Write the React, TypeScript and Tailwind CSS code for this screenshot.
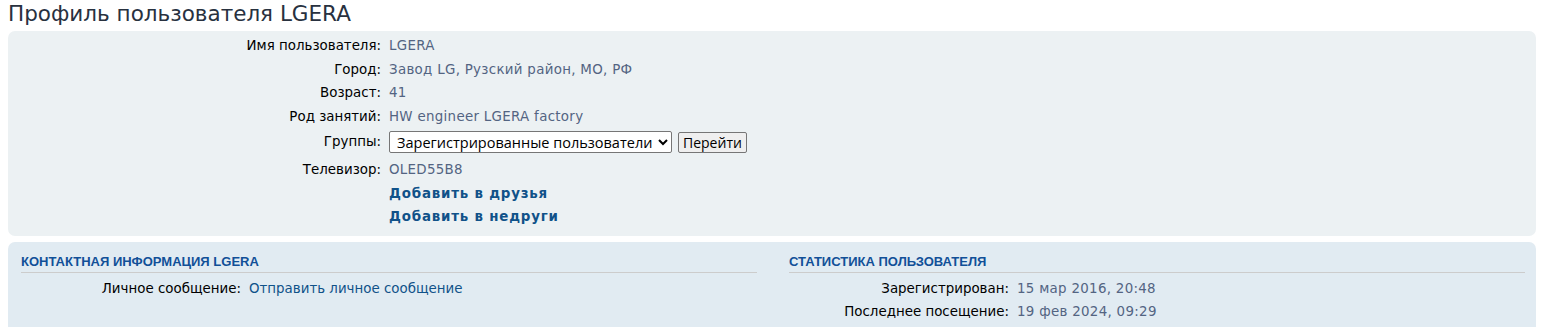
const body = { fontFamily: '"DejaVu Sans", Verdana, sans-serif' };

function Row({ label, children, labelW }: { label: string; children: React.ReactNode; labelW: string }) {
  return (
    <div className="flex items-baseline h-[23.5px]">
      <div className={`${labelW} shrink-0 text-right text-black`}>{label}</div>
      <div className="pl-2 text-[#536482] tracking-[0.3px]">{children}</div>
    </div>
  );
}

function SectionTitle({ children }: { children: React.ReactNode }) {
  return (
    <h3
      className="text-[13px] font-bold uppercase text-[#115098] border-b border-[#cccccc] pb-[1px] mb-[6px] leading-[18px]"
      style={{ fontFamily: '"Liberation Sans", Arial, sans-serif' }}
    >
      {children}
    </h3>
  );
}

export default function App() {
  return (
    <div className="bg-white min-h-screen px-2 text-[13.4px]" style={body}>
      <h2
        className="text-[21.5px] leading-[26px] pt-[1px] pb-[4px] text-[#28313f]"
        style={{ fontFamily: '"DejaVu Sans", Verdana, sans-serif' }}
      >
        Профиль пользователя LGERA
      </h2>

      <div className="bg-[#ecf1f3] rounded-[7px] pt-[5px] pb-[8px]">
        <Row label="Имя пользователя:" labelW="w-[373px]">LGERA</Row>
        <Row label="Город:" labelW="w-[373px]">Завод LG, Рузский район, МО, РФ</Row>
        <Row label="Возраст:" labelW="w-[373px]">41</Row>
        <Row label="Род занятий:" labelW="w-[373px]">HW engineer LGERA factory</Row>
        <div className="flex items-start pt-[1px] h-[30px]">
          <div className="w-[373px] shrink-0 text-right text-black pt-[1px]">Группы:</div>
          <div className="pl-2 flex gap-[6px]">
            <select
              className="h-[22px] w-[283px] bg-white border border-[#767676] rounded-[2px] text-[14.5px] text-black pl-[3px]"
              style={{ fontFamily: '"Open Sans", Arial, sans-serif' }}
              defaultValue="reg"
            >
              <option value="reg">Зарегистрированные пользователи</option>
            </select>
            <button
              className="h-[21px] mt-[1px] px-[4px] bg-[#efefef] border border-[#767676] rounded-[2px] text-[14px] text-black leading-none"
              style={{ fontFamily: '"Open Sans", Arial, sans-serif' }}
            >
              Перейти
            </button>
          </div>
        </div>
        <Row label="Телевизор:" labelW="w-[373px]">OLED55B8</Row>
        <div className="flex flex-col pl-[381px] -mt-[2px] tracking-[0.8px]">
          <a className="font-bold text-[#105289] h-[23px] leading-[23px]">Добавить в друзья</a>
          <a className="font-bold text-[#105289] h-[23px] leading-[23px]">Добавить в недруги</a>
        </div>
      </div>

      <div className="bg-[#e1ebf2] rounded-t-[7px] mt-[6px] pt-[11px] pl-[13px] pr-[11px] pb-[10px] flex gap-[32px]">
        <div className="flex-1">
          <SectionTitle>Контактная информация LGERA</SectionTitle>
          <div className="flex items-baseline h-[23px]">
            <div className="w-[220px] shrink-0 text-right text-black">Личное сообщение:</div>
            <a className="pl-2 text-[#105289]">Отправить личное сообщение</a>
          </div>
        </div>
        <div className="flex-1">
          <SectionTitle>Статистика пользователя</SectionTitle>
          <Row label="Зарегистрирован:" labelW="w-[220px]">15 мар 2016, 20:48</Row>
          <Row label="Последнее посещение:" labelW="w-[220px]">19 фев 2024, 09:29</Row>
        </div>
      </div>
    </div>
  );
}
